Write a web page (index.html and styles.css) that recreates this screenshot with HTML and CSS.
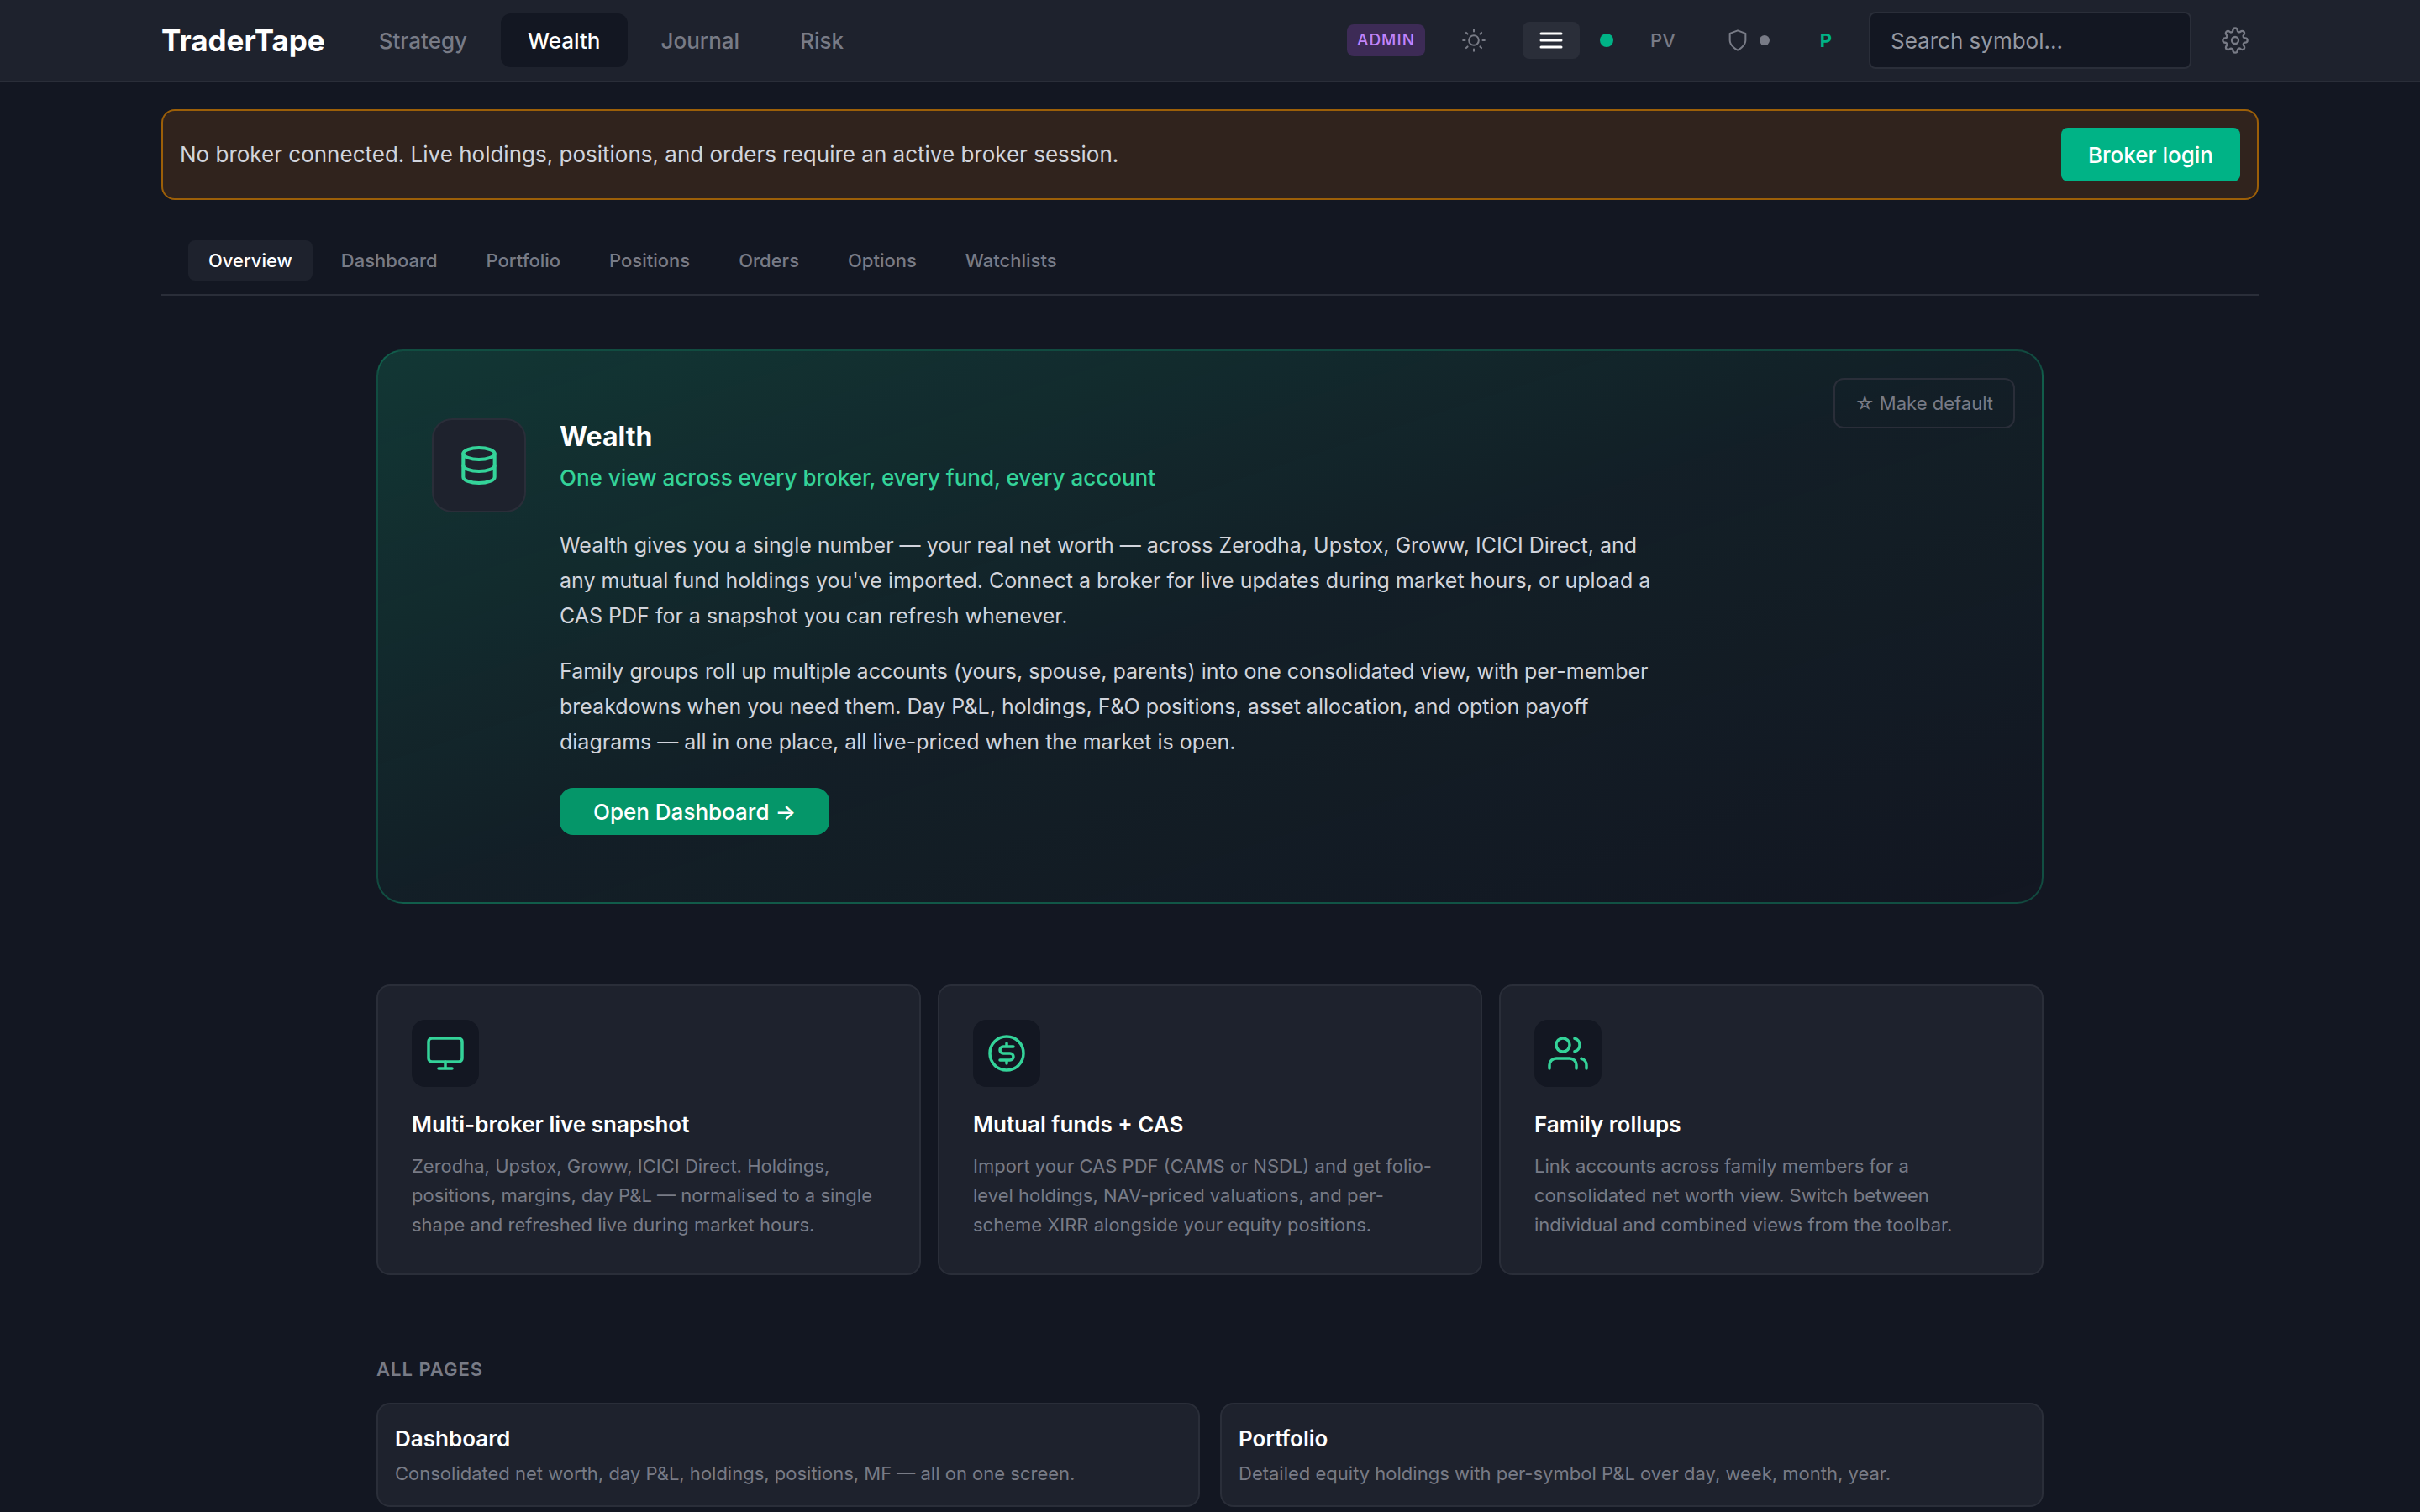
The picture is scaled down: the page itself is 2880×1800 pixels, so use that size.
FILE: index.html
```html
<!DOCTYPE html>
<html lang="en">

<head>
	<meta charset="utf-8">
	<meta name="viewport" content="width=device-width, initial-scale=1">
	<title>TraderTape - Wealth</title>
	<link rel="stylesheet" href="styles.css">
</head>

<body>

	<header class="topbar">
		<div class="container topbar-inner">
			<a class="brand" href="#">TraderTape</a>
			<nav class="main-nav" aria-label="Main">
				<a class="nav-link" href="#">Strategy</a>
				<a class="nav-link active" href="#" aria-current="page">Wealth</a>
				<a class="nav-link" href="#">Journal</a>
				<a class="nav-link" href="#">Risk</a>
			</nav>
			<div class="tools">
				<span class="badge">ADMIN</span>
				<button type="button" class="tool tool-theme" aria-label="Theme">
					<svg class="icon" width="28" height="28" viewBox="0 0 24 24">
						<circle cx="12" cy="12" r="5" />
						<path d="M12 1v2M12 21v2M4.22 4.22l1.42 1.42M18.36 18.36l1.42 1.42M1 12h2M21 12h2M4.22 19.78l1.42-1.42M18.36 5.64l1.42-1.42" />
					</svg>
				</button>
				<button type="button" class="tool tool-density" aria-label="Density">
					<svg width="28" height="20" viewBox="0 0 28 20">
						<path d="M2 2h24M2 10h24M2 18h24" />
					</svg>
				</button>
				<span class="dot dot-live"></span>
				<button type="button" class="tool tool-text">PV</button>
				<button type="button" class="tool tool-shield" aria-label="Protection">
					<svg class="icon" width="28" height="28" viewBox="0 0 24 24">
						<path d="M12 22s8-4 8-10V5l-8-3-8 3v7c0 6 8 10 8 10z" />
					</svg>
					<span class="dot dot-idle"></span>
				</button>
				<button type="button" class="tool tool-text tool-plan">P</button>
				<input class="search" type="text" placeholder="Search symbol..." aria-label="Search symbol">
				<button type="button" class="tool tool-settings" aria-label="Settings">
					<svg class="icon" width="32" height="32" viewBox="0 0 24 24">
						<circle cx="12" cy="12" r="3" />
						<path d="M19.4 15a1.65 1.65 0 0 0 .33 1.82l.06.06a2 2 0 0 1 0 2.83 2 2 0 0 1-2.83 0l-.06-.06a1.65 1.65 0 0 0-1.82-.33 1.65 1.65 0 0 0-1 1.51V21a2 2 0 0 1-2 2 2 2 0 0 1-2-2v-.09A1.65 1.65 0 0 0 9 19.4a1.65 1.65 0 0 0-1.82.33l-.06.06a2 2 0 0 1-2.83 0 2 2 0 0 1 0-2.83l.06-.06a1.65 1.65 0 0 0 .33-1.82 1.65 1.65 0 0 0-1.51-1H3a2 2 0 0 1-2-2 2 2 0 0 1 2-2h.09A1.65 1.65 0 0 0 4.6 9a1.65 1.65 0 0 0-.33-1.82l-.06-.06a2 2 0 0 1 0-2.83 2 2 0 0 1 2.83 0l.06.06a1.65 1.65 0 0 0 1.82.33H9a1.65 1.65 0 0 0 1-1.51V3a2 2 0 0 1 2-2 2 2 0 0 1 2 2v.09a1.65 1.65 0 0 0 1 1.51 1.65 1.65 0 0 0 1.82-.33l.06-.06a2 2 0 0 1 2.83 0 2 2 0 0 1 0 2.83l-.06.06a1.65 1.65 0 0 0-.33 1.82V9a1.65 1.65 0 0 0 1.51 1H21a2 2 0 0 1 2 2 2 2 0 0 1-2 2h-.09a1.65 1.65 0 0 0-1.51 1z" />
					</svg>
				</button>
			</div>
		</div>
	</header>

	<main class="container">

		<div class="notice">
			<p>No broker connected. Live holdings, positions, and orders require an active broker session.</p>
			<button type="button" class="btn-login">Broker login</button>
		</div>

		<nav class="tabs" aria-label="Wealth">
			<a class="tab active" href="#" aria-current="page">Overview</a>
			<a class="tab" href="#">Dashboard</a>
			<a class="tab" href="#">Portfolio</a>
			<a class="tab" href="#">Positions</a>
			<a class="tab" href="#">Orders</a>
			<a class="tab" href="#">Options</a>
			<a class="tab" href="#">Watchlists</a>
		</nav>

		<div class="content">

			<section class="hero">
				<button type="button" class="btn-default">☆ Make default</button>
				<div class="hero-icon">
					<svg class="icon icon-green" width="56" height="56" viewBox="0 0 24 24">
						<ellipse cx="12" cy="6" rx="8" ry="3" />
						<path d="M4 6v6c0 1.66 3.58 3 8 3s8-1.34 8-3V6" />
						<path d="M4 12v6c0 1.66 3.58 3 8 3s8-1.34 8-3v-6" />
					</svg>
				</div>
				<div class="hero-body">
					<h1>Wealth</h1>
					<p class="tagline">One view across every broker, every fund, every account</p>
					<p>Wealth gives you a single number — your real net worth — across Zerodha, Upstox, Groww, ICICI Direct, and any mutual fund holdings you've imported. Connect a broker for live updates during market hours, or upload a CAS PDF for a snapshot you can refresh whenever.</p>
					<p>Family groups roll up multiple accounts (yours, spouse, parents) into one consolidated view, with per-member breakdowns when you need them. Day P&amp;L, holdings, F&amp;O positions, asset allocation, and option payoff diagrams — all in one place, all live-priced when the market is open.</p>
					<a class="btn-open" href="#">Open Dashboard →</a>
				</div>
			</section>

			<section class="features">
				<article class="feature">
					<div class="feature-icon">
						<svg class="icon icon-green" width="48" height="48" viewBox="0 0 24 24">
							<rect x="2" y="3" width="20" height="14" rx="2" />
							<path d="M8 21h8M12 17v4" />
						</svg>
					</div>
					<h2>Multi-broker live snapshot</h2>
					<p>Zerodha, Upstox, Groww, ICICI Direct. Holdings, positions, margins, day P&amp;L — normalised to a single shape and refreshed live during market hours.</p>
				</article>
				<article class="feature">
					<div class="feature-icon">
						<svg class="icon icon-green" width="48" height="48" viewBox="0 0 24 24">
							<circle cx="12" cy="12" r="10" />
							<path d="M16 8h-6a2 2 0 1 0 0 4h4a2 2 0 1 1 0 4H8M12 6v2M12 16v2" />
						</svg>
					</div>
					<h2>Mutual funds + CAS</h2>
					<p>Import your CAS PDF (CAMS or NSDL) and get folio-level holdings, NAV-priced valuations, and per-scheme XIRR alongside your equity positions.</p>
				</article>
				<article class="feature">
					<div class="feature-icon">
						<svg class="icon icon-green" width="48" height="48" viewBox="0 0 24 24">
							<path d="M17 21v-2a4 4 0 0 0-4-4H5a4 4 0 0 0-4 4v2" />
							<circle cx="9" cy="7" r="4" />
							<path d="M23 21v-2a4 4 0 0 0-3-3.87M16 3.13a4 4 0 0 1 0 7.75" />
						</svg>
					</div>
					<h2>Family rollups</h2>
					<p>Link accounts across family members for a consolidated net worth view. Switch between individual and combined views from the toolbar.</p>
				</article>
			</section>

			<section class="pages">
				<h2 class="section-title">All pages</h2>
				<div class="page-grid">
					<a class="page-card" href="#">
						<h3>Dashboard</h3>
						<p>Consolidated net worth, day P&amp;L, holdings, positions, MF — all on one screen.</p>
					</a>
					<a class="page-card" href="#">
						<h3>Portfolio</h3>
						<p>Detailed equity holdings with per-symbol P&amp;L over day, week, month, year.</p>
					</a>
				</div>
			</section>

		</div>

	</main>

</body>
</html>
```

FILE: styles.css
```css
:root {
	--bg: #131722;
	--panel: #1e222d;
	--border: #2a2e39;
	--text: #d1d4dc;
	--muted: #787b86;
	--accent: #00b386;
	--green: #34d399;
}

* {
	box-sizing: border-box;
}

body {
	margin: 0;
	background: var(--bg);
	color: var(--text);
	font-family: Inter, "Liberation Sans", sans-serif;
	font-size: 26px;
	line-height: 42px;
}

h1,
h2,
h3,
p {
	margin: 0;
}

h1,
h2,
h3 {
	color: #fff;
	font-weight: 600;
}

a {
	color: inherit;
	text-decoration: none;
}

button,
input {
	font: inherit;
	color: inherit;
}

button {
	border: 0;
	background: none;
	padding: 0;
	cursor: pointer;
}

.container {
	max-width: 2560px;
	margin: 0 auto;
	padding: 0 32px;
}

.icon {
	display: block;
	fill: none;
	stroke: currentColor;
	stroke-width: 1.75;
	stroke-linecap: round;
	stroke-linejoin: round;
}

.icon-green {
	color: var(--green);
}

/* Top bar */

.topbar {
	background: var(--panel);
	border-bottom: 2px solid var(--border);
}

.topbar-inner {
	display: flex;
	align-items: center;
	height: 96px;
}

.brand {
	color: #fff;
	font-size: 35px;
	font-weight: 700;
	margin-right: 32px;
}

.main-nav {
	display: flex;
	gap: 8px;
}

.nav-link {
	padding: 12px 32px 10px;
	border-radius: 12px;
	color: var(--muted);
	font-weight: 500;
}

.nav-link.active {
	background: var(--bg);
	color: #fff;
}

.tools {
	display: flex;
	align-items: center;
	margin-left: auto;
}

.badge {
	padding: 0 12px;
	border-radius: 8px;
	background: #3d2b56;
	color: #c084fc;
	font-size: 19px;
	font-weight: 500;
	line-height: 38px;
	letter-spacing: 1px;
}

.tool {
	display: flex;
	align-items: center;
	justify-content: center;
	height: 44px;
	border-radius: 8px;
	color: var(--muted);
}

.tool-theme {
	width: 68px;
	margin: 0 24px;
}

.tool-density {
	width: 68px;
	background: var(--border);
	color: #fff;
}

.tool-density path {
	fill: none;
	stroke: currentColor;
	stroke-width: 3;
	stroke-linecap: round;
}

.tool-text {
	padding: 0 20px;
	font-size: 22px;
	font-weight: 500;
}

.tool-plan {
	color: var(--accent);
	font-weight: 700;
}

.tool-shield {
	gap: 12px;
	padding: 0 40px;
}

.dot {
	border-radius: 50%;
}

.dot-live {
	width: 16px;
	height: 16px;
	margin: 0 24px;
	background: var(--accent);
}

.dot-idle {
	width: 12px;
	height: 12px;
	background: var(--muted);
}

.search {
	width: 384px;
	height: 68px;
	margin: 0 24px;
	padding: 0 24px;
	border: 2px solid var(--border);
	border-radius: 8px;
	background: var(--bg);
}

.search::placeholder {
	color: #9598a1;
	opacity: 1;
}

.tool-settings {
	width: 56px;
}

/* Broker notice */

.notice {
	display: flex;
	align-items: center;
	justify-content: space-between;
	margin-top: 32px;
	padding: 20px;
	border: 2px solid #9c5f08;
	border-radius: 16px;
	background: #30231d;
}

.btn-login {
	padding: 12px 32px 10px;
	border-radius: 8px;
	background: var(--accent);
	color: #fff;
	font-weight: 500;
}

/* Section tabs */

.tabs {
	display: flex;
	gap: 10px;
	margin-top: 32px;
	padding: 16px 32px;
	border-bottom: 2px solid var(--border);
}

.tab {
	padding: 0 24px;
	border-radius: 8px;
	color: var(--muted);
	font-size: 22px;
	font-weight: 500;
	line-height: 48px;
}

.tab.active {
	background: var(--panel);
	color: #fff;
}

.content {
	max-width: 1984px;
	margin: 64px auto 0;
}

/* Hero */

.hero {
	position: relative;
	display: flex;
	align-items: flex-start;
	gap: 40px;
	padding: 80px 64px;
	border: 2px solid rgba(16, 185, 129, 0.3);
	border-radius: 32px;
	background: linear-gradient(to bottom right, rgba(16, 185, 129, 0.2), rgba(16, 185, 129, 0.05) 50%, rgba(16, 185, 129, 0));
}

.hero-icon {
	display: flex;
	align-items: center;
	justify-content: center;
	flex: none;
	width: 112px;
	height: 112px;
	border: 2px solid var(--border);
	border-radius: 24px;
	background: var(--panel);
}

.hero-body {
	max-width: 1320px;
	padding-top: 2px;
}

.hero-body h1 {
	font-size: 32px;
	font-weight: 700;
	line-height: 40px;
}

.hero-body p {
	font-size: 25px;
}

.hero-body p + p {
	margin-top: 24px;
}

.hero-body .tagline {
	margin-top: 8px;
	color: var(--green);
	font-size: 26px;
	font-weight: 500;
}

.hero-body .tagline + p {
	margin-top: 38px;
}

.btn-open {
	display: inline-block;
	margin-top: 34px;
	padding: 8px 40px 6px;
	border-radius: 16px;
	background: #059669;
	color: #fff;
	font-weight: 500;
	vertical-align: top;
}

.btn-default {
	position: absolute;
	top: 32px;
	right: 32px;
	height: 60px;
	padding: 0 24px;
	border: 2px solid var(--border);
	border-radius: 12px;
	color: var(--muted);
	font-size: 22px;
}

/* Feature cards */

.features {
	display: grid;
	grid-template-columns: repeat(3, 1fr);
	gap: 20px;
	margin-top: 96px;
}

.feature {
	padding: 40px;
	border: 2px solid var(--border);
	border-radius: 16px;
	background: var(--panel);
}

.feature-icon {
	display: flex;
	align-items: center;
	justify-content: center;
	width: 80px;
	height: 80px;
	margin-bottom: 24px;
	border-radius: 16px;
	background: var(--bg);
}

.feature h2 {
	margin-bottom: 11px;
	font-size: 26px;
}

.feature p {
	color: var(--muted);
	font-size: 22px;
	line-height: 35px;
}

/* All pages */

.pages {
	margin-top: 96px;
}

.section-title {
	margin-bottom: 24px;
	color: var(--muted);
	font-size: 22px;
	line-height: 32px;
	letter-spacing: 1px;
	text-transform: uppercase;
}

.page-grid {
	display: grid;
	grid-template-columns: repeat(2, 1fr);
	gap: 24px;
}

.page-card {
	padding: 20px;
	border: 2px solid var(--border);
	border-radius: 16px;
	background: var(--panel);
}

.page-card h3 {
	font-size: 26px;
}

.page-card p {
	margin-top: 3px;
	color: var(--muted);
	font-size: 22px;
	line-height: 35px;
}
```
